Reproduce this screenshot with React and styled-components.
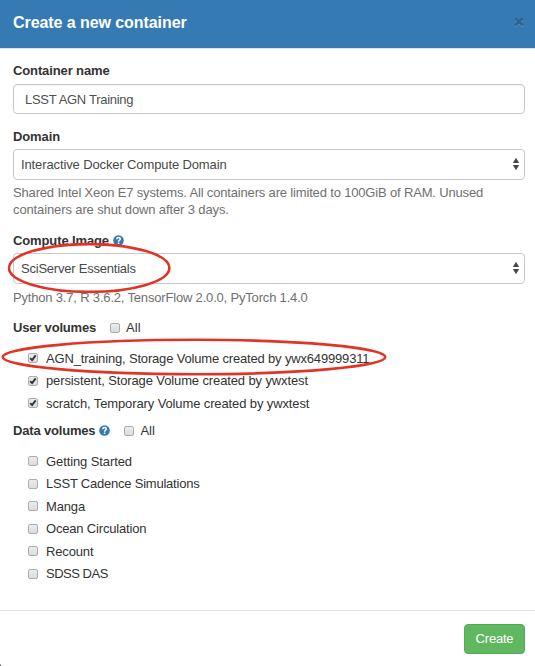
import React from "react";
import styled, { createGlobalStyle } from "styled-components";

const GlobalStyle = createGlobalStyle`
  * { box-sizing: border-box; }
  body {
    margin: 0;
    background: #fff;
    color: #333;
    font-family: "Liberation Sans", Arial, sans-serif;
    font-size: 13px;
    line-height: 17px;
  }
`;

const Modal = styled.main`
  position: relative;
  display: flex;
  flex-direction: column;
  width: 535px;
  height: 666px;
  overflow: hidden;
`;

const Header = styled.header`
  display: flex;
  align-items: center;
  justify-content: space-between;
  height: 49px;
  padding: 0 11px 4px 13px;
  background: #367ab4;
  border-bottom: 1px solid #dfe6ec;
`;

const Title = styled.h1`
  margin: 0;
  padding-top: 1px;
  color: #fff;
  font-size: 16px;
  line-height: 20px;
  letter-spacing: -0.07px;
`;

const CloseButton = styled.button`
  display: flex;
  padding: 0;
  border: 0;
  background: none;
`;

const Body = styled.div`
  flex: 1;
  padding: 13px 10px 0 13px;
`;

const Field = styled.section`
  height: ${(p) => p.$height}px;
`;

const LabelRow = styled.div`
  display: flex;
  align-items: center;
  height: 18px;
  padding-bottom: 1px;
  margin-bottom: ${(p) => p.$gap ?? 3}px;
`;

const Label = styled.label`
  font-weight: bold;
  letter-spacing: ${(p) => p.$spacing ?? -0.12}px;
  white-space: nowrap;
`;

const HelpIcon = styled.svg`
  width: 11px;
  height: 11px;
  margin-left: 4px;
`;

const TextInput = styled.input`
  display: block;
  width: 512px;
  height: 30px;
  padding: 0 11px;
  border: 1px solid #c8c8c8;
  border-radius: 4px;
  box-shadow: inset 0 1px 1px rgba(0, 0, 0, 0.06);
  color: #505050;
  font: inherit;
  letter-spacing: -0.3px;
  outline: none;
`;

const Select = styled.div`
  display: flex;
  align-items: center;
  justify-content: space-between;
  width: 512px;
  height: 31px;
  padding: 0 4px 0 7px;
  border: 1px solid #c8c8c8;
  border-radius: 4px;
  color: #484848;
  letter-spacing: ${(p) => p.$spacing ?? 0}px;
`;

const ArrowIcon = styled.svg`
  width: 8px;
  height: 14px;
  margin-bottom: 2px;
`;

const Help = styled.p`
  margin: ${(p) => p.$top ?? 0}px 0 0;
  color: #707070;
  letter-spacing: ${(p) => p.$spacing ?? 0}px;
  white-space: nowrap;
`;

const AllOption = styled.label`
  display: flex;
  align-items: center;
  gap: 6px;
  margin-left: 14px;
`;

const List = styled.ul`
  margin: 10px 0 0;
  padding: 0 0 0 15px;
  list-style: none;
`;

const Item = styled.li`
  display: flex;
  align-items: center;
  gap: 8px;
  height: 22.5px;
  letter-spacing: ${(p) => p.$spacing ?? 0}px;
  white-space: nowrap;
`;

const Box = styled.span`
  display: flex;
  flex: none;
  width: 10px;
  height: 10px;
  border: 1px solid #adadad;
  border-radius: 2px;
  background: linear-gradient(#ececec, #dcdcdc);

  ${AllOption} & {
    margin-top: 1px;
  }
`;

const Footer = styled.footer`
  display: flex;
  justify-content: flex-end;
  height: 56px;
  padding: 13px 10px 0;
  border-top: 1px solid #e3e3e3;
`;

const CreateButton = styled.button`
  width: 61px;
  height: 30px;
  padding: 0 0 1px;
  border: 1px solid #55a955;
  border-radius: 4px;
  background: #5fb760;
  color: #fff;
  font: inherit;
  letter-spacing: -0.2px;
`;

const Annotations = styled.svg`
  position: absolute;
  inset: 0;
  pointer-events: none;
`;

const Question = () => (
  <HelpIcon viewBox="0 0 11 11">
    <circle cx="5.5" cy="5.5" r="5.3" fill="#3478b2" />
    <path d="M3.7 4.2C3.8 1.9 7.4 2 7.3 4.1C7.2 5.2 5.6 5.3 5.6 6.7" fill="none" stroke="#fff" strokeWidth="1.5" />
    <path d="M4.8 7.5h1.6v1.4H4.8z" fill="#fff" />
  </HelpIcon>
);

const Arrows = () => (
  <ArrowIcon viewBox="0 0 8 14">
    <path d="M4 0.8L7.2 6H0.8ZM0.8 8H7.2L4 13.2Z" fill="#484848" />
  </ArrowIcon>
);

const Checkbox = ({ checked }) => (
  <Box role="checkbox" aria-checked={!!checked}>
    {checked && (
      <svg width="8" height="8" viewBox="0 0 8 8">
        <path d="M1.2 4.2L3.1 6.1L6.7 1.4" fill="none" stroke="#333" strokeWidth="1.9" />
      </svg>
    )}
  </Box>
);

const All = () => (
  <AllOption>
    <Checkbox />
    All
  </AllOption>
);

const userVolumes = [
  { name: "AGN_training, Storage Volume created by ywx649999311", spacing: -0.17 },
  { name: "persistent, Storage Volume created by ywxtest", spacing: -0.12 },
  { name: "scratch, Temporary Volume created by ywxtest", spacing: -0.12 },
];

const dataVolumes = [
  { name: "Getting Started", spacing: -0.1 },
  { name: "LSST Cadence Simulations", spacing: -0.22 },
  { name: "Manga", spacing: -0.15 },
  { name: "Ocean Circulation", spacing: -0.18 },
  { name: "Recount", spacing: -0.15 },
  { name: "SDSS DAS", spacing: -0.48 },
];

export default function App() {
  return (
    <>
      <GlobalStyle />
      <Modal>
        <Header>
          <Title>Create a new container</Title>
          <CloseButton aria-label="Close">
            <svg width="10" height="10" viewBox="0 0 10 10">
              <path d="M1.4 2.6L8.6 9.6M8.6 2.6L1.4 9.6" stroke="#6297c4" strokeWidth="1.6" />
              <path d="M1.4 1.4L8.6 8.4M8.6 1.4L1.4 8.4" stroke="#2b628f" strokeWidth="2.3" />
            </svg>
          </CloseButton>
        </Header>
        <Body>
          <Field $height={66}>
            <LabelRow $gap={4}>
              <Label>Container name</Label>
            </LabelRow>
            <TextInput defaultValue="LSST AGN Training" />
          </Field>
          <Field $height={104}>
            <LabelRow>
              <Label>Domain</Label>
            </LabelRow>
            <Select $spacing={-0.12}>
              Interactive Docker Compute Domain
              <Arrows />
            </Select>
            <Help $top={4} $spacing={-0.165}>
              Shared Intel Xeon E7 systems. All containers are limited to 100GiB of RAM. Unused
            </Help>
            <Help $spacing={-0.12}>containers are shut down after 3 days.</Help>
          </Field>
          <Field $height={87}>
            <LabelRow>
              <Label>Compute Image</Label>
              <Question />
            </LabelRow>
            <Select $spacing={-0.22}>
              SciServer Essentials
              <Arrows />
            </Select>
            <Help $top={5} $spacing={-0.18}>Python 3.7, R 3.6.2, TensorFlow 2.0.0, PyTorch 1.4.0</Help>
          </Field>
          <Field $height={103}>
            <LabelRow>
              <Label $spacing={-0.18}>User volumes</Label>
              <All />
            </LabelRow>
            <List>
              {userVolumes.map(({ name, spacing }) => (
                <Item key={name} $spacing={spacing}>
                  <Checkbox checked />
                  {name}
                </Item>
              ))}
            </List>
          </Field>
          <Field $height={163}>
            <LabelRow>
              <Label $spacing={-0.18}>Data volumes</Label>
              <Question />
              <All />
            </LabelRow>
            <List>
              {dataVolumes.map(({ name, spacing }) => (
                <Item key={name} $spacing={spacing}>
                  <Checkbox />
                  {name}
                </Item>
              ))}
            </List>
          </Field>
        </Body>
        <Footer>
          <CreateButton>Create</CreateButton>
        </Footer>
        <Annotations width="535" height="666" viewBox="0 0 535 666" fill="none" stroke="#e03526" strokeWidth="2.6">
          <ellipse cx="89.2" cy="268" rx="80.2" ry="23.9" />
          <ellipse cx="194" cy="357" rx="191.3" ry="17.2" />
          <path d="M0 664L1.3 666H0Z" fill="#333" stroke="none" />
        </Annotations>
      </Modal>
    </>
  );
}
